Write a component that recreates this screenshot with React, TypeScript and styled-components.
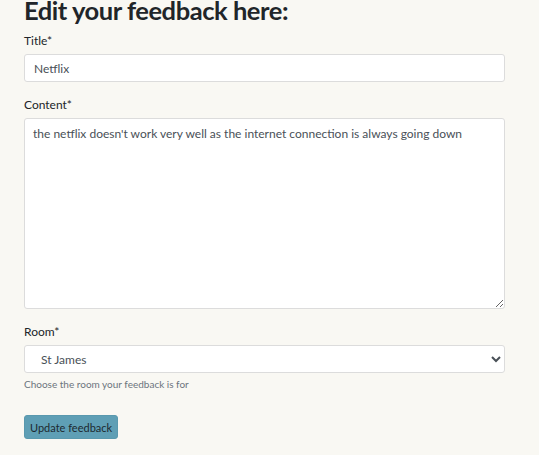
import React from "react";
import styled, { createGlobalStyle } from "styled-components";

const FONT = `"Lato", "Open Sans", sans-serif`;

const Global = createGlobalStyle`
  html, body { margin: 0; padding: 0; background: #f9f8f3; }
  body { font-family: ${FONT}; color: #212529; }
  * { box-sizing: border-box; }
`;

const Page = styled.div`
  padding: 0 34px 0 24px;
  width: 539px;
  height: 455px;
  overflow: hidden;
`;

const Heading = styled.h1`
  font-family: ${FONT};
  font-size: 25.5px;
  font-weight: 700;
  letter-spacing: -0.45px;
  line-height: 21px;
  margin: 0 0 12px;
  color: #212529;
`;

const Form = styled.form`
  display: flex;
  flex-direction: column;
`;

const Group = styled.div<{ $mb: number }>`
  display: flex;
  flex-direction: column;
  margin-bottom: ${(p) => p.$mb}px;
`;

const Label = styled.label`
  font-size: 12px;
  line-height: 16px;
  margin-bottom: 5px;
  color: #212529;
`;

const fieldBase = `
  width: 100%;
  font-family: ${FONT};
  font-size: 12px;
  color: #495057;
  background: #fff;
  border: 1px solid #dcdcdc;
  border-radius: 3px;
  outline: none;
`;

const Input = styled.input`
  ${fieldBase}
  height: 28px;
  padding: 4px 9px;
`;

const TextArea = styled.textarea`
  ${fieldBase}
  height: 191px;
  padding: 6px 8px;
  line-height: 18px;
  resize: vertical;
`;

const Select = styled.select`
  ${fieldBase}
  height: 28px;
  padding: 4px 12px;
  appearance: auto;
`;

const Help = styled.small`
  font-size: 10px;
  color: #6c757d;
  margin-top: 5px;
`;

const Button = styled.button`
  align-self: flex-start;
  font-family: ${FONT};
  font-size: 11px;
  color: #1d2a30;
  background: #5f9fb5;
  border: 1px solid #5a99ae;
  border-radius: 3px;
  height: 24px;
  padding: 0 5px;
`;

export default function App() {
  return (
    <Page>
      <Global />
      <Heading>Edit your feedback here:</Heading>
      <Form onSubmit={(e) => e.preventDefault()}>
        <Group $mb={15}>
          <Label>Title*</Label>
          <Input defaultValue="Netflix" />
        </Group>
        <Group $mb={15}>
          <Label>Content*</Label>
          <TextArea defaultValue="the netflix doesn't work very well as the internet connection is always going down" />
        </Group>
        <Group $mb={25}>
          <Label>Room*</Label>
          <Select defaultValue="St James">
            <option>St James</option>
          </Select>
          <Help>Choose the room your feedback is for</Help>
        </Group>
        <Button type="submit">Update feedback</Button>
      </Form>
    </Page>
  );
}
